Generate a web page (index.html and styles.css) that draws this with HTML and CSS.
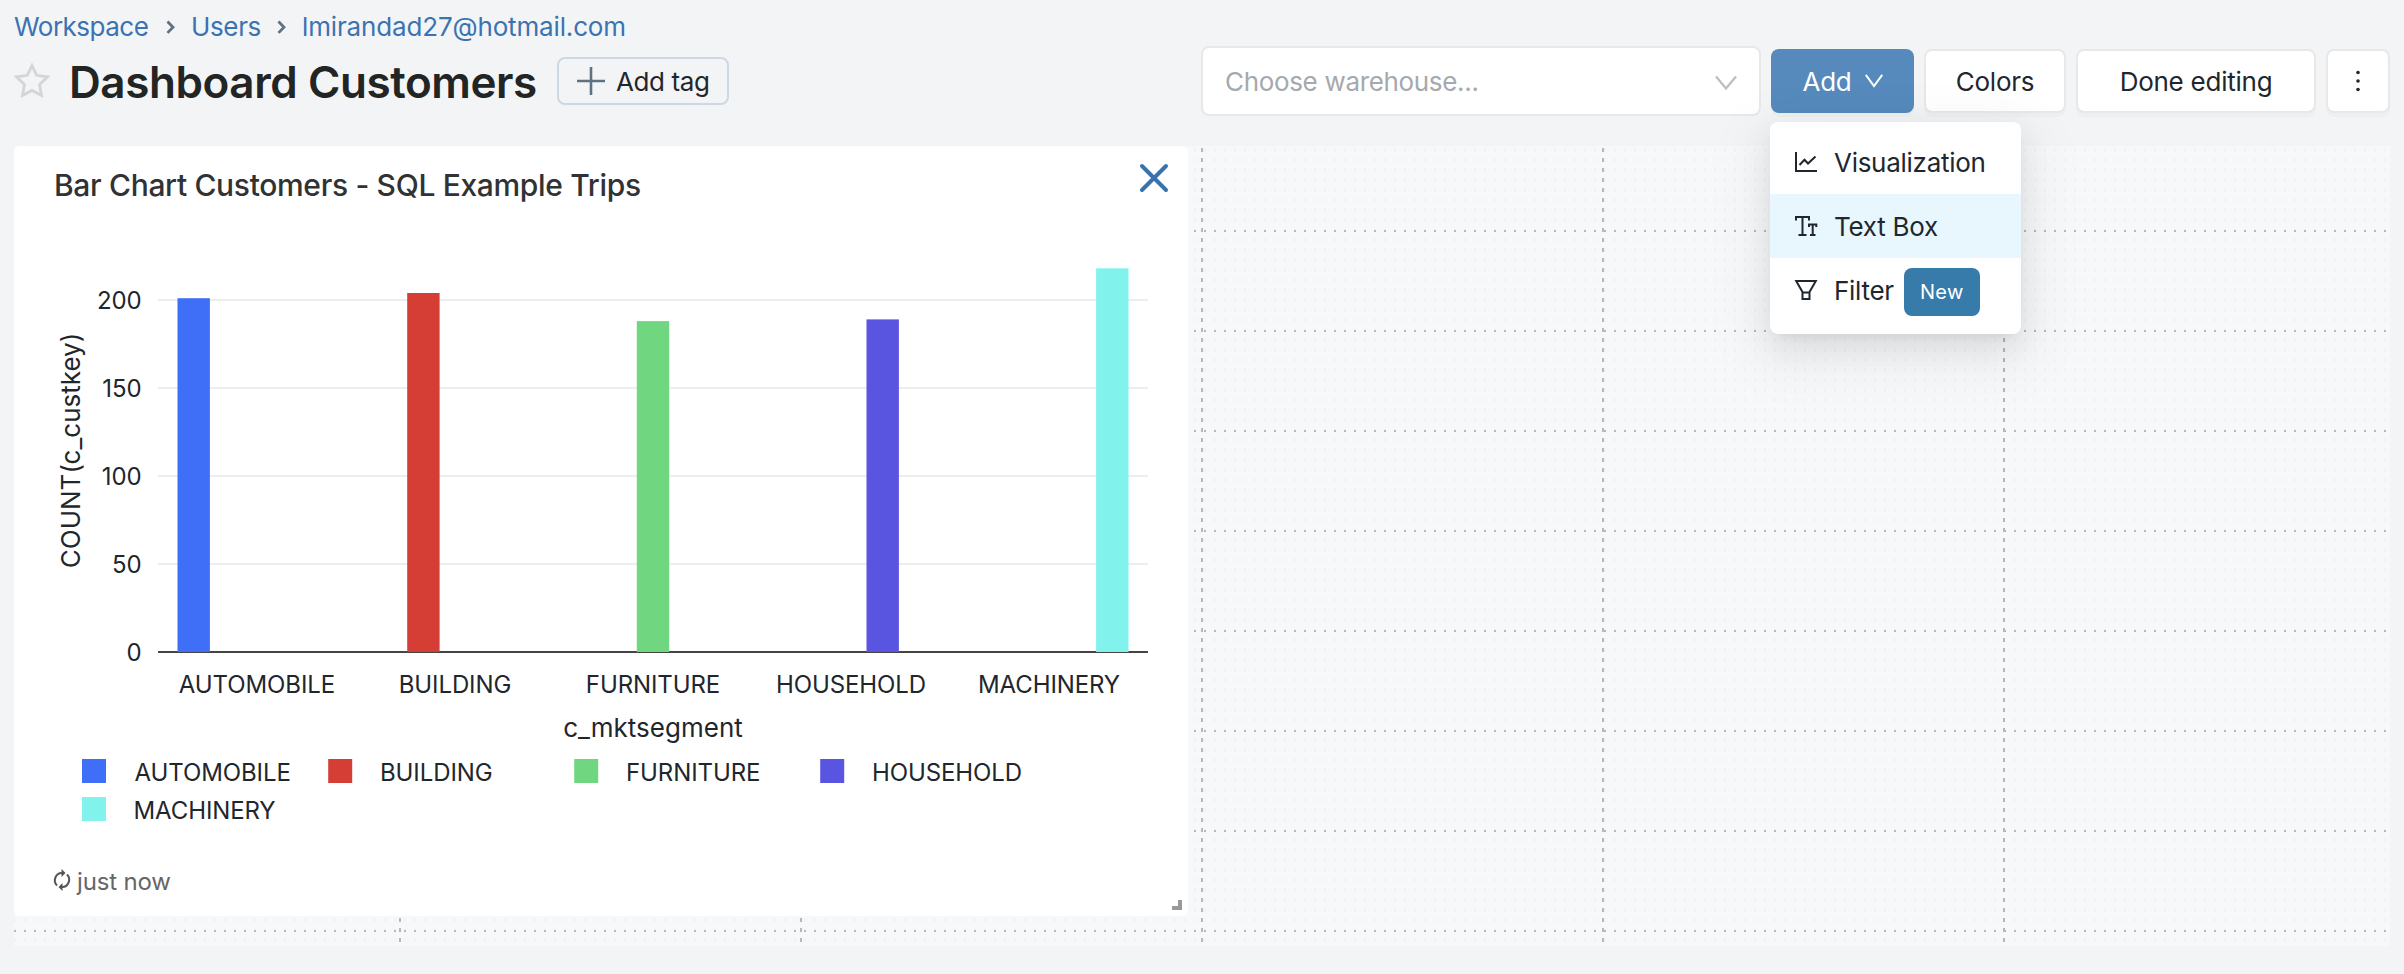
FILE: index.html
```html
<!DOCTYPE html>
<html lang="en">
<head>
<meta charset="utf-8">
<title>Dashboard Customers</title>
<link rel="stylesheet" href="styles.css">
</head>
<body>
<header class="header">
  <nav class="crumbs">
    <a class="crumb crumb-workspace">Workspace</a>
    <svg class="crumb-sep" width="9" height="14" viewBox="0 0 9 14"><path d="M1.500 1.500 7 7.200l-5.500 5.700"/></svg>
    <a class="crumb crumb-users">Users</a>
    <svg class="crumb-sep" width="9" height="14" viewBox="0 0 9 14"><path d="M1.500 1.500 7 7.200l-5.500 5.700"/></svg>
    <a class="crumb crumb-mail">lmirandad27@hotmail.com</a>
  </nav>
  <div class="title-row">
    <svg class="star" width="36" height="36" viewBox="0 0 36 36"><path d="M18 2.500 22.600 12.300 33.500 13.800 25.600 21.400 27.500 32.500 18 27.400 8.500 32.500 10.400 21.400 2.500 13.800 13.400 12.300Z"/></svg>
    <h1 class="title">Dashboard Customers</h1>
    <button class="tag-btn"><svg width="28" height="28" viewBox="0 0 28 28"><path d="M14 0v28M0 14h28"/></svg><span>Add tag</span></button>
  </div>
  <div class="toolbar">
    <div class="select"><span class="placeholder">Choose warehouse...</span><svg width="22" height="14" viewBox="0 0 22 14"><path d="M1 .5 11 12.500 21 .5"/></svg></div>
    <button class="btn btn-primary"><span>Add</span><svg width="18" height="14" viewBox="0 0 18 14"><path d="M.8 .8 9 12 17.200 .8"/></svg></button>
    <button class="btn btn-colors">Colors</button>
    <button class="btn btn-done">Done editing</button>
    <button class="btn btn-more"><svg width="4" height="22" viewBox="0 0 4 22"><circle cx="2" cy="2.500" r="1.800"/><circle cx="2" cy="11" r="1.800"/><circle cx="2" cy="19.500" r="1.800"/></svg></button>
    <ul class="menu">
      <li class="item"><svg width="22" height="20" viewBox="0 0 22 20"><path d="M1 0v19h21M4.500 13 9.500 7.800 13 11.500 20.500 4.500"/></svg><span class="label">Visualization</span></li>
      <li class="item active"><svg width="22" height="20" viewBox="0 0 22 20"><path d="M1 4.500V1h13v3.500M7.500 1v18M3.500 19h8M14 11V8.500h7.300V11M17.700 8.500V19M15 19h5.500"/></svg><span class="label">Text Box</span></li>
      <li class="item"><svg width="22" height="20" viewBox="0 0 22 20"><path d="M1.200 1h19.600L14.500 12v7h-7v-7ZM7.500 12.500h7"/></svg><span class="label">Filter</span><span class="badge">New</span></li>
    </ul>
  </div>
</header>
<main class="board">
  <svg class="guides" width="2376" height="800" viewBox="14 146 2376 800">
    <defs>
      <pattern id="dots" x="14" y="148" width="10" height="10" patternUnits="userSpaceOnUse"><rect width="2" height="4" fill="#f1f3f5"/></pattern>
    </defs>
    <rect x="14" y="148" width="2376" height="796" fill="url(#dots)"/>
    <path class="rows" d="M14 231H2390M14 331H2390M14 431H2390M14 531H2390M14 631H2390M14 731H2390M14 831H2390M14 931H2390"/>
    <path class="cols" d="M400 148V944M801 148V944M1202 148V944M1603 148V944M2004 148V944"/>
  </svg>
  <section class="card">
    <div class="card-head">
      <h2 class="card-title">Bar Chart Customers - SQL Example Trips</h2>
      <svg class="close" width="28" height="28" viewBox="0 0 28 28"><path d="M2 2 26 26M26 2 2 26"/></svg>
    </div>
    <svg class="chart" width="1174" height="610" viewBox="14 230 1174 610">
      <path class="grid" d="M158 300H1148M158 388H1148M158 476H1148M158 564H1148"/>
      <path class="axis" d="M158 652H1148"/>
      <rect x="177.500" y="298.200" width="32.400" height="353.800" fill="#3f6ff7"/>
      <rect x="407.200" y="293" width="32.400" height="359" fill="#d53e34"/>
      <rect x="636.800" y="321.100" width="32.400" height="330.900" fill="#70d680"/>
      <rect x="866.500" y="319.400" width="32.400" height="332.600" fill="#5a55e0"/>
      <rect x="1096.100" y="268.300" width="32.400" height="383.700" fill="#82f3ec"/>
      <g class="ticks end"><text x="141.500" y="308.500">200</text><text x="141.500" y="396.500">150</text><text x="141.500" y="484.500">100</text><text x="141.500" y="572.500">50</text><text x="141.500" y="660.500">0</text></g>
      <g class="ticks mid"><text x="257" y="692.500">AUTOMOBILE</text><text x="455" y="692.500">BUILDING</text><text x="653" y="692.500">FURNITURE</text><text x="851" y="692.500">HOUSEHOLD</text><text x="1049" y="692.500">MACHINERY</text></g>
      <text class="axis-title" x="653" y="737">c_mktsegment</text>
      <text class="axis-title" transform="translate(79.500 450.500) rotate(-90)">COUNT(c_custkey)</text>
      <rect x="82" y="759" width="24" height="24" fill="#3f6ff7"/><rect x="328.200" y="759" width="24" height="24" fill="#d53e34"/><rect x="574.200" y="759" width="24" height="24" fill="#70d680"/><rect x="820.200" y="759" width="24" height="24" fill="#5a55e0"/><rect x="82" y="797" width="24" height="24" fill="#82f3ec"/>
      <g class="ticks"><text x="134.500" y="780.500">AUTOMOBILE</text><text x="380" y="780.500">BUILDING</text><text x="626" y="780.500">FURNITURE</text><text x="872" y="780.500">HOUSEHOLD</text><text x="133.500" y="818.500">MACHINERY</text></g>
    </svg>
    <footer class="card-foot">
      <svg class="refresh" width="18" height="22" viewBox="0 0 18 22"><path d="M4 16.500A7 7.300 0 0 1 9.500 4M14 5.500A7 7.300 0 0 1 8.500 18"/><path class="tip" d="M8.500 0 12.500 4 8.500 8ZM9.500 14 5.500 18 9.500 22Z"/></svg>
      <span class="ago">just now</span>
      <i class="grip"></i>
    </footer>
  </section>
</main>
</body>
</html>
```
FILE: styles.css
```css
* { box-sizing: border-box; }
body { margin: 0; width: 2404px; height: 974px; overflow: hidden; background: #f3f4f6; color: #1f272d; font-family: Inter, "Liberation Sans", sans-serif; font-size: 26px; }
svg { display: block; flex: none; overflow: visible; }
button { font: inherit; color: inherit; white-space: nowrap; letter-spacing: -.25px; }
.header { position: relative; height: 146px; padding: 0 14px; }
.crumbs { display: flex; align-items: center; height: 54px; color: #3b73b1; }
.crumb { line-height: 54px; white-space: nowrap; letter-spacing: -.15px; }
.crumb-workspace { width: 152px; letter-spacing: -.5px; }
.crumb-users { width: 86px; letter-spacing: -.35px; }
.crumb-sep { margin-right: 16px; fill: none; stroke: #5f7281; stroke-width: 2.800; }
.title-row { display: flex; align-items: center; height: 54px; }
.star { fill: none; stroke: #d3d5d6; stroke-width: 2.800; }
.title { margin: 2px 0 0 19px; width: 488px; font-size: 44px; line-height: 54px; font-weight: 600; white-space: nowrap; color: #222524; letter-spacing: -.42px; }
.tag-btn { display: flex; align-items: center; gap: 11px; width: 172px; height: 48px; padding: 0 0 0 18px; border: 2px solid #cdd8e4; border-radius: 8px; background: transparent; }
.tag-btn svg { fill: none; stroke: #5f7281; stroke-width: 2.600; }
.tag-btn span { margin-top: 1px; letter-spacing: -.4px; }
.toolbar { position: absolute; left: 1201px; top: 46px; display: flex; align-items: center; height: 70px; }
.select { display: flex; align-items: center; justify-content: space-between; width: 560px; height: 70px; margin-right: 10px; padding: 0 22px 0 22px; border: 2px solid #e8e8e8; border-radius: 8px; background: #fff; color: #a5a9ac; }
.placeholder { letter-spacing: -.33px; }
.select svg { margin-top: 4px; fill: none; stroke: #bfbfbf; stroke-width: 2.400; }
.btn { display: flex; align-items: center; justify-content: center; height: 64px; margin: 0 10px 0 0; padding: 0; border: 2px solid #e8e8e8; border-radius: 8px; background: #fff; box-shadow: 0 4px 0 rgba(0, 0, 0, .02); }
.btn-primary { gap: 13px; width: 143px; border: 0; background: #568abc; color: #fff; }
.btn-primary svg { fill: none; stroke: #fff; stroke-width: 2; margin-top: -1px; }
.btn-colors { width: 142px; }
.btn-done { width: 240px; }
.btn-more { width: 64px; margin-right: 0; fill: #1f272d; }
.menu { position: absolute; z-index: 2; left: 569px; top: 76px; width: 251px; height: 212px; margin: 0; padding: 8px 0 12px; list-style: none; border-radius: 8px; background: #fff; box-shadow: 0 6px 12px -8px rgba(0,0,0,.12), 0 12px 32px rgba(0,0,0,.08), 0 18px 56px 16px rgba(0,0,0,.05); }
.item { display: flex; align-items: center; height: 64px; padding-left: 25px; }
.item.active { background: #e8f7fe; }
.item svg { margin-right: 17px; fill: none; stroke: #1f272d; stroke-width: 2; }
.label { margin-top: 1px; letter-spacing: -.28px; }
.badge { width: 76px; height: 48px; margin: 4px 0 0 10px; border-radius: 8px; background: #377bab; color: #fff; font-size: 20px; line-height: 49px; text-align: center; letter-spacing: .4px; }
.board { position: relative; display: grid; width: 2376px; height: 800px; margin-left: 14px; background: #f6f8fa; }
.guides, .card { grid-area: 1 / 1; }
.rows, .cols { fill: none; stroke: #b5b8bb; stroke-width: 2; }
.rows { stroke-dasharray: 2 8; }
.cols { stroke-dasharray: 4 6; }
.card { position: relative; width: 1174px; height: 770px; border-radius: 6px; background: #fff; }
.card-head { display: flex; justify-content: space-between; height: 84px; padding: 18px 20px 0 40px; }
.card-title { margin: 0; font-size: 30px; line-height: 43px; font-weight: 500; color: #303233; letter-spacing: -.33px; }
.close { fill: none; stroke: #3a72b0; stroke-width: 4; stroke-linecap: round; }
.grid { stroke: #ededed; stroke-width: 2; }
.axis { stroke: #444; stroke-width: 2; }
.ticks, .axis-title { fill: #1f272d; }
.ticks { font-size: 24px; letter-spacing: -.1px; }
.axis-title { font-size: 26px; text-anchor: middle; }
.end { text-anchor: end; }
.mid { text-anchor: middle; }
.card-foot { display: flex; align-items: center; height: 60px; margin-top: 11px; padding-left: 39px; gap: 6px; color: #666; font-size: 24px; letter-spacing: -.15px; }
.refresh { fill: none; stroke: #555; stroke-width: 2; margin-bottom: 2px; }
.tip { fill: #555; stroke: none; }
.grip { position: absolute; right: 6px; bottom: 6px; width: 10px; height: 10px; border: solid #999; border-width: 0 4px 4px 0; }
```
